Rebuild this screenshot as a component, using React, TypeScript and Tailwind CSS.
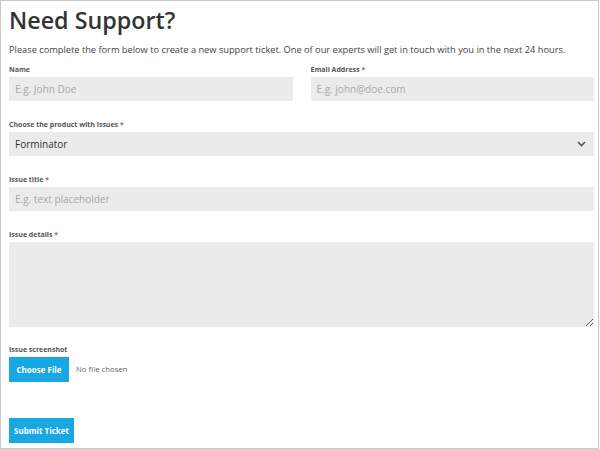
import { useState } from "react";

const fieldClass =
  "block h-[24px] w-full bg-[#ebebeb] px-[6px] text-[10px] text-[#333] outline-none placeholder:text-[#a8a8a8]";

function Label({ text, required }: { text: string; required?: boolean }) {
  return (
    <label className="mb-[3px] block h-[9px] text-[7px] font-bold leading-[9px] text-[#555]">
      {text}
      {required && <span className="text-[#d9534f]"> *</span>}
    </label>
  );
}

export default function App() {
  const [fileName, setFileName] = useState<string | null>(null);

  return (
    <div className="h-[449px] w-[599px] border border-[#c8c8c8] bg-white px-[8px] pt-[3px] font-['Open_Sans',sans-serif]">
      <h1 className="text-[23.3px] font-semibold leading-[32px] text-[#333]">
        Need Support?
      </h1>
      <p className="mt-[7px] whitespace-nowrap text-[9.25px] leading-[14px] text-[#444]">
        Please complete the form below to create a new support ticket. One of
        our experts will get in touch with you in the next 24 hours.
      </p>

      <form className="w-[585px]" onSubmit={(e) => e.preventDefault()}>
        <div className="mt-[8px] grid grid-cols-2 gap-x-[18px]">
          <div>
            <Label text="Name" />
            <input className={fieldClass} placeholder="E.g. John Doe" />
          </div>
          <div>
            <Label text="Email Address" required />
            <input className={fieldClass} placeholder="E.g. john@doe.com" />
          </div>
        </div>

        <div className="mt-[19px]">
          <Label text="Choose the product with issues" required />
          <div className="relative">
            <select
              className={`${fieldClass} appearance-none px-[5px]`}
              defaultValue="forminator"
            >
              <option value="forminator">Forminator</option>
              <option value="hustle">Hustle</option>
              <option value="smush">Smush</option>
            </select>
            <svg
              className="pointer-events-none absolute right-[8px] top-[9px]"
              width="9"
              height="6"
              viewBox="0 0 9 6"
              fill="none"
            >
              <path d="M1 1l3.5 3.5L8 1" stroke="#555" strokeWidth="1.6" />
            </svg>
          </div>
        </div>

        <div className="mt-[19px]">
          <Label text="Issue title" required />
          <input className={fieldClass} placeholder="E.g. text placeholder" />
        </div>

        <div className="mt-[19px]">
          <Label text="Issue details" required />
          <textarea className={`${fieldClass} h-[85px] py-[4px]`} />
        </div>

        <div className="mt-[18px]">
          <Label text="Issue screenshot" />
          <div className="flex items-center gap-[7px]">
            <label className="flex h-[25px] w-[60px] cursor-pointer items-center justify-center bg-[#17a8e3] text-[8px] font-bold text-white">
              Choose File
              <input
                type="file"
                className="hidden"
                onChange={(e) => setFileName(e.target.files?.[0]?.name ?? null)}
              />
            </label>
            <span className="text-[7.8px] text-[#666]">
              {fileName ?? "No file chosen"}
            </span>
          </div>
        </div>

        <button
          type="submit"
          className="mt-[36px] flex h-[25px] w-[65px] items-center justify-center bg-[#17a8e3] text-[8px] font-bold text-white"
        >
          Submit Ticket
        </button>
      </form>
    </div>
  );
}
